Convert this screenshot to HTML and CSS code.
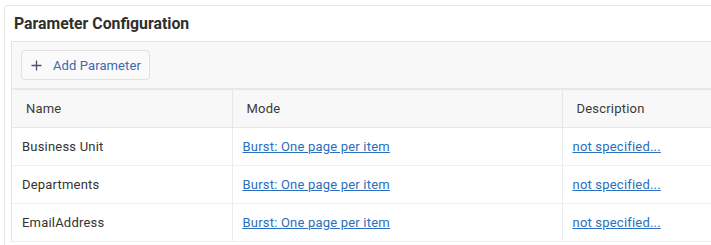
FILE: index.html
```html
<!DOCTYPE html>
<html>
<head>
<meta charset="utf-8">
<link rel="stylesheet" href="styles.css">
</head>
<body>
<div class="card">
  <div class="card-title">Parameter Configuration</div>
  <div class="panel">
    <div class="toolbar">
      <button class="add-btn">
        <svg class="plus" width="11" height="11" viewBox="0 0 11 11"><path d="M5.5 0.5v10M0.5 5.5h10" stroke="#5a4a6e" stroke-width="1.3" fill="none"/></svg>
        <span>Add Parameter</span>
      </button>
    </div>
    <table class="grid">
      <colgroup><col class="c-name"><col class="c-mode"><col class="c-desc"></colgroup>
      <thead>
        <tr><th>Name</th><th>Mode</th><th>Description</th></tr>
      </thead>
      <tbody>
        <tr><td>Business Unit</td><td><a href="#">Burst: One page per item</a></td><td><a href="#">not specified...</a></td></tr>
        <tr><td>Departments</td><td><a href="#">Burst: One page per item</a></td><td><a href="#">not specified...</a></td></tr>
        <tr><td>EmailAddress</td><td><a href="#">Burst: One page per item</a></td><td><a href="#">not specified...</a></td></tr>
      </tbody>
    </table>
  </div>
</div>
</body>
</html>
```
FILE: styles.css
```css
html, body {
  margin: 0;
  padding: 0;
  background: #ffffff;
  overflow: hidden;
  font-family: Roboto, "Liberation Sans", sans-serif;
  font-size: 13px;
  color: #333333;
}
.card {
  margin: 5px -40px 0 4px;
  border: 1px solid #e6e6e6;
  border-radius: 4px 0 0 0;
  padding-left: 6px;
  height: 300px;
  background: #ffffff;
}
.card-title {
  height: 35px;
  padding-left: 3px;
  display: flex;
  align-items: center;
  font-weight: bold;
  font-size: 15.8px;
  color: #2f2f2f;
}
.panel {
  border-top: 1px solid #e3e3e3;
  border-left: 1px solid #e3e3e3;
  background: #f8f8f8;
}
.toolbar {
  padding: 8px 0 0 9px;
  box-sizing: border-box;
  border-bottom: 2px solid #e8e8e8;
  height: 48px;
}
.add-btn {
  display: flex;
  align-items: center;
  height: 30px;
  width: 129px;
  box-sizing: border-box;
  border: 1px solid #e0e0e0;
  border-radius: 4px;
  background: #fafafa;
  padding: 0 0 0 9px;
  font-family: Roboto, "Liberation Sans", sans-serif;
  font-size: 13px;
  letter-spacing: 0.1px;
  color: #3b69b0;
}
.plus {
  margin-right: 11px;
}
.grid {
  border-collapse: collapse;
  table-layout: fixed;
  width: 740px;
  letter-spacing: 0.2px;
}
.c-name { width: 220px; }
.c-mode { width: 330px; }
.grid th {
  height: 37px;
  padding: 0 0 0 14px;
  text-align: left;
  font-weight: normal;
  color: #3a3a3a;
  border-bottom: 1px solid #e6e6e6;
  border-right: 1px solid #e6e6e6;
  background: #f8f8f8;
}
.grid td {
  height: 37px;
  padding: 0 0 0 10px;
  background: #ffffff;
  border-bottom: 1px solid #f0f0f0;
  border-right: 1px solid #ececec;
  color: #333333;
}
.grid a {
  color: #2a6ebd;
  text-decoration: underline;
}
```
